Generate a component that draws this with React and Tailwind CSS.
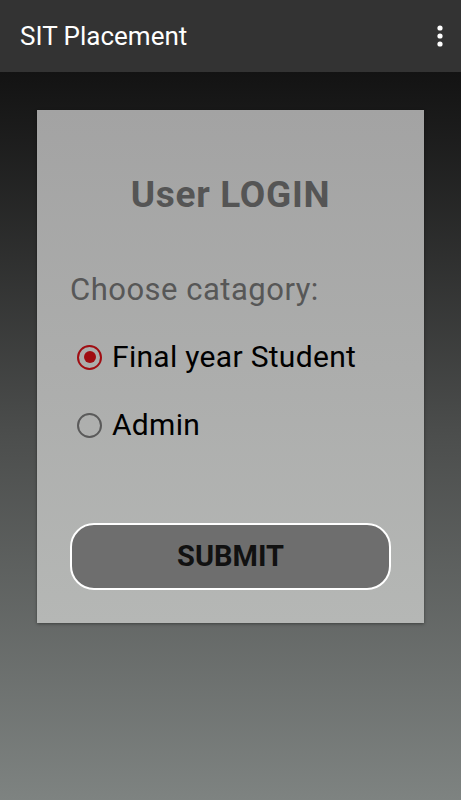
import React, { useState } from 'react';

const OPTIONS = ['Final year Student', 'Admin'];

function Radio({ checked }) {
  return (
    <span
      className={`flex h-[25px] w-[25px] shrink-0 items-center justify-center rounded-full border-[2.5px] ${
        checked ? 'border-[#a00d12]' : 'border-[#5a5a5a]'
      }`}
    >
      {checked && <span className="h-[12px] w-[12px] rounded-full bg-[#a00d12]" />}
    </span>
  );
}

export default function App() {
  const [choice, setChoice] = useState(0);

  return (
    <div className="flex h-[800px] w-[461px] flex-col font-['Roboto',sans-serif]">
      {/* App bar */}
      <header className="flex h-[72px] shrink-0 items-center justify-between bg-[#333333] pl-[20px] pr-[18px] shadow-[0_2px_4px_rgba(0,0,0,0.5)]">
        <h1 className="text-[26px] leading-[32px] text-white">SIT Placement</h1>
        <svg width="6" height="22" viewBox="0 0 6 22" fill="white">
          <circle cx="3" cy="3" r="2.6" />
          <circle cx="3" cy="11" r="2.6" />
          <circle cx="3" cy="19" r="2.6" />
        </svg>
      </header>

      {/* Body */}
      <main className="flex-1 bg-gradient-to-b from-[#131313] via-[#4c4e4d] to-[#7e8381] px-[37px] pt-[38px]">
        <div className="flex h-[513px] flex-col bg-gradient-to-b from-[#a3a3a3] to-[#b5b7b5] px-[33px] pt-[63px] shadow-[0_1px_3px_rgba(0,0,0,0.4)]">
          <h2 className="whitespace-nowrap text-center text-[37px] leading-[44px] font-bold tracking-[0.7px] text-[#555555]">
            User LOGIN
          </h2>

          <p className="mt-[55px] whitespace-nowrap text-[31px] leading-[36px] tracking-[0.5px] text-[#575757]">
            Choose catagory:
          </p>

          <div className="mt-[31px] flex flex-col gap-[32px] pl-[7px]">
            {OPTIONS.map((o, i) => (
              <button
                key={o}
                onClick={() => setChoice(i)}
                className="flex h-[36px] items-center gap-[10px] text-left"
              >
                <Radio checked={choice === i} />
                <span className="whitespace-nowrap text-[30px] leading-[36px] tracking-[0.3px] text-black">{o}</span>
              </button>
            ))}
          </div>

          <button className="mt-[80px] flex h-[67px] w-full shrink-0 items-center justify-center rounded-[24px] border-2 border-white bg-[#6e6e6e] text-[29px] font-bold text-[#111]">
            SUBMIT
          </button>
        </div>
      </main>
    </div>
  );
}
